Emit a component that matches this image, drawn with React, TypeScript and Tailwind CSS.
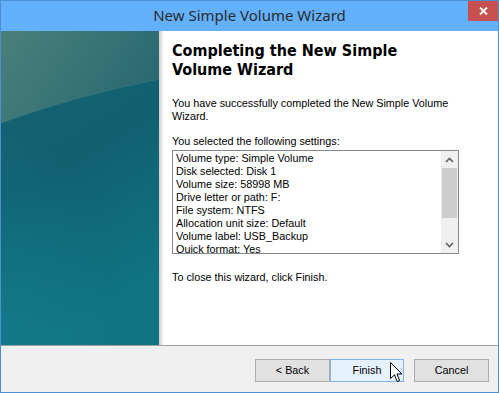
import React from 'react';

const SETTINGS = [
  'Volume type: Simple Volume',
  'Disk selected: Disk 1',
  'Volume size: 58998 MB',
  'Drive letter or path: F:',
  'File system: NTFS',
  'Allocation unit size: Default',
  'Volume label: USB_Backup',
  'Quick format: Yes',
];

const SideArt: React.FC = () => (
  <svg className="w-full h-full block" viewBox="0 0 158 314" preserveAspectRatio="none">
    <defs>
      <linearGradient id="base" x1="0" y1="0" x2="0.3" y2="1">
        <stop offset="0" stopColor="#1a6572" />
        <stop offset="0.5" stopColor="#106070" />
        <stop offset="1" stopColor="#117483" />
      </linearGradient>
      <linearGradient id="cap" x1="0" y1="0" x2="1" y2="0.4">
        <stop offset="0" stopColor="#4a807b" />
        <stop offset="1" stopColor="#2b6a72" />
      </linearGradient>
      <radialGradient id="glow" cx="0" cy="1" r="0.7">
        <stop offset="0" stopColor="#158090" stopOpacity="0.6" />
        <stop offset="1" stopColor="#158090" stopOpacity="0" />
      </radialGradient>
    </defs>
    <rect width="158" height="314" fill="url(#base)" />
    <rect width="158" height="314" fill="url(#glow)" />
    <path d="M0 92 Q70 66 158 48 L158 0 L0 0 Z" fill="url(#cap)" />
    <path d="M0 92 Q70 66 158 48" stroke="#5a8d88" strokeOpacity="0.35" strokeWidth="1" fill="none" />
  </svg>
);

const Chevron: React.FC<{ up?: boolean }> = ({ up }) => (
  <svg width="9" height="6" viewBox="0 0 9 6" className="block">
    <path d={up ? 'M1 5 L4.5 1.5 L8 5' : 'M1 1 L4.5 4.5 L8 1'} stroke="#606060" strokeWidth="1.6" fill="none" />
  </svg>
);

const Cursor: React.FC = () => (
  <svg width="13" height="21" viewBox="0 0 13 21" className="absolute left-[59px] top-[2px]">
    <path d="M0.5 0.5 L0.5 16.5 L4.5 12.8 L7.2 19.5 L9.6 18.5 L7 12 L12 12 Z" fill="#fff" stroke="#000" strokeWidth="1" strokeLinejoin="miter" />
  </svg>
);

const App: React.FC = () => {
  const body = "text-[10.8px] leading-[13px] text-black [font-family:'Liberation_Sans',Arial,sans-serif]";

  return (
    <div className="w-[499px] h-[393px] border border-[#4d8fd3] flex flex-col bg-white overflow-hidden">
      <div className="h-[30px] shrink-0 bg-[#63b1fd] relative flex items-center justify-center">
        <span className="text-[15px] text-[#2a2a2a] [font-family:'Segoe_UI','Noto_Sans',sans-serif] -mt-[1px]">
          New Simple Volume Wizard
        </span>
        <div className="absolute top-0 right-0 w-[30px] h-[20px] bg-[#c75050] flex items-center justify-center">
          <svg width="9" height="8" viewBox="0 0 9 8">
            <path d="M1 0.5 L8 7.5 M8 0.5 L1 7.5" stroke="#fff" strokeWidth="1.8" />
          </svg>
        </div>
      </div>

      <div className="flex-1 flex min-h-0">
        <div className="w-[158px] shrink-0">
          <SideArt />
        </div>
        <div className="w-[5px] shrink-0 bg-gradient-to-r from-[#cfcfcf] to-white" />
        <div className="flex-1 pl-[8px] pt-[10px] flex flex-col">
          <h1 className="text-[16px] leading-[19px] font-bold text-black [font-family:'DejaVu_Sans_Condensed','DejaVu_Sans',Verdana,sans-serif]">
            Completing the New Simple
            <br />
            Volume Wizard
          </h1>
          <p className={`${body} mt-[18px] w-[290px]`}>
            You have successfully completed the New Simple Volume Wizard.
          </p>
          <p className={`${body} mt-[12px]`}>You selected the following settings:</p>
          <div className="mt-[2px] w-[287px] h-[104px] border border-[#828790] flex">
            <div className="flex-1 overflow-hidden pl-[3px] pt-[1px]">
              {SETTINGS.map((s) => (
                <div key={s} className={`${body} whitespace-nowrap`}>
                  {s}
                </div>
              ))}
            </div>
            <div className="w-[17px] bg-[#f0f0f0] flex flex-col">
              <div className="h-[17px] flex items-center justify-center">
                <Chevron up />
              </div>
              <div className="h-[50px] mx-[1px] bg-[#cdcdcd]" />
              <div className="flex-1" />
              <div className="h-[17px] flex items-center justify-center">
                <Chevron />
              </div>
            </div>
          </div>
          <p className={`${body} mt-[17px]`}>To close this wizard, click Finish.</p>
        </div>
      </div>

      <div className="h-[47px] shrink-0 border-t border-[#a0a0a0] bg-[#f0f0f0] flex justify-end items-start pt-[13px] pr-[9px]">
        <button className={`${body} w-[75px] h-[23px] border border-[#adadad] bg-[#e1e1e1]`}>&lt; Back</button>
        <button className={`${body} relative w-[74px] h-[23px] border border-[#7eb4ea] bg-[#e5f1fb]`}>
          Finish
          <Cursor />
        </button>
        <button className={`${body} ml-[10px] w-[75px] h-[23px] border border-[#adadad] bg-[#e1e1e1]`}>Cancel</button>
      </div>
    </div>
  );
};

export default App;
